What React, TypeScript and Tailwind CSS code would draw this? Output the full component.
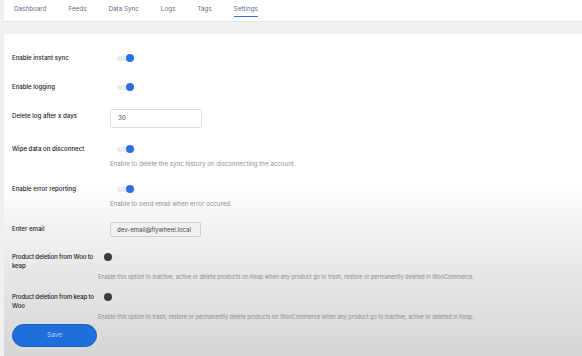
import React from "react";

const tabs = ["Dashboard", "Feeds", "Data Sync", "Logs", "Tags", "Settings"];

const Toggle = ({ on }: { on: boolean }) => (
  <div className="flex h-[10px] items-center">
    {on ? (
      <div className="relative h-[5px] w-[17px] rounded-full bg-[#e8ecf3]">
        <span className="absolute right-0 top-[-1.5px] h-[8px] w-[8px] rounded-full bg-[#2c6fe3]" />
      </div>
    ) : (
      <div className="relative h-[5px] w-[17px] rounded-full bg-[#e6e6e6]">
        <span className="absolute left-0 top-[-1.5px] h-[8px] w-[8px] rounded-full bg-[#3c3c3c]" />
      </div>
    )}
  </div>
);

const Desc = ({ children, small }: { children: React.ReactNode; small?: boolean }) => (
  <p className={small ? "mt-[11px] whitespace-nowrap text-[5.5px] leading-[8px] text-[#8c8c8c]" : "mt-[6px] whitespace-nowrap text-[6.2px] leading-[8px] text-[#8f8f8f]"}>
    {children}
  </p>
);

const Label = ({ children, w = "w-[98px]" }: { children: React.ReactNode; w?: string }) => (
  <div className={`${w} shrink-0 pr-[2px] text-[6.1px] font-medium leading-[9px] text-[#222]`}>{children}</div>
);

export default function App() {
  return (
    <div className="h-[356px] w-[582px] overflow-hidden bg-[#eef0f2] font-['Inter',sans-serif]">
      <div className="ml-[4px] h-full bg-[linear-gradient(to_bottom,#ffffff_52%,#ebebeb_72%,#d6d6d6)]">
        <nav className="flex h-[22px] items-start gap-[22px] border-b border-[#e3e5e8] bg-white pl-[10px] pt-[5px] text-[6.3px] text-[#5f6f86]">
          {tabs.map((t) => (
            <span
              key={t}
              className={t === "Settings" ? "border-b-[1.5px] border-[#3b6fd0] pb-[2px] leading-[9px]" : "leading-[9px]"}
            >
              {t}
            </span>
          ))}
        </nav>
        <div className="h-[12px] bg-[#f0f1f2]" />
        <div className="flex flex-col pl-[8px] pt-[19px]">
          <div className="flex h-[29px] items-start">
            <Label>Enable instant sync</Label>
            <div className="pl-[7px]">
              <Toggle on />
            </div>
          </div>
          <div className="flex h-[29px] items-start">
            <Label>Enable logging</Label>
            <div className="pl-[7px]">
              <Toggle on />
            </div>
          </div>
          <div className="flex h-[33px] items-start">
            <Label>Delete log after x days</Label>
            <div className="-mt-[2px] flex h-[19px] w-[92px] items-center rounded-[2px] border border-[#dedede] bg-white pl-[7px] text-[6.3px] text-[#444]">
              30
            </div>
          </div>
          <div className="flex h-[40px] items-start">
            <Label>Wipe data on disconnect</Label>
            <div>
              <div className="pl-[7px]">
                <Toggle on />
              </div>
              <Desc>Enable to delete the sync history on disconnecting the account.</Desc>
            </div>
          </div>
          <div className="flex h-[40px] items-start">
            <Label>Enable error reporting</Label>
            <div>
              <div className="pl-[7px]">
                <Toggle on />
              </div>
              <Desc>Enable to send email when error occured.</Desc>
            </div>
          </div>
          <div className="flex h-[28px] items-start">
            <Label>Enter email</Label>
            <div className="-mt-[2px] flex h-[15px] w-[91px] items-center rounded-[2px] border border-[#cfcfcf] bg-[#f1f1f1] pl-[6px] text-[6.1px] text-[#444]">
              dev-email@flywheel.local
            </div>
          </div>
          <div className="flex h-[40px] items-start">
            <Label w="w-[86px] whitespace-nowrap tracking-[-0.15px]">
              Product deletion from Woo to
              <br />
              keap
            </Label>
            <div>
              <div className="pl-[6px]">
                <Toggle on={false} />
              </div>
              <Desc small>
                Enable this option to inactive, active or delete products on Keap when any product go to trash, restore or permanently deleted in WooCommerce.
              </Desc>
            </div>
          </div>
          <div className="flex h-[32px] items-start">
            <Label w="w-[86px] whitespace-nowrap tracking-[-0.15px]">
              Product deletion from keap to
              <br />
              Woo
            </Label>
            <div>
              <div className="pl-[6px]">
                <Toggle on={false} />
              </div>
              <Desc small>
                Enable this option to trash, restore or permanently delete products on WooCommerce when any product go to inactive, active or deleted in Keap.
              </Desc>
            </div>
          </div>
          <button className="h-[23px] w-[85px] rounded-full border border-[#1a5fc0] bg-[#1f6fdb] text-[6.5px] text-[#b9cff5]">
            Save
          </button>
        </div>
      </div>
    </div>
  );
}
